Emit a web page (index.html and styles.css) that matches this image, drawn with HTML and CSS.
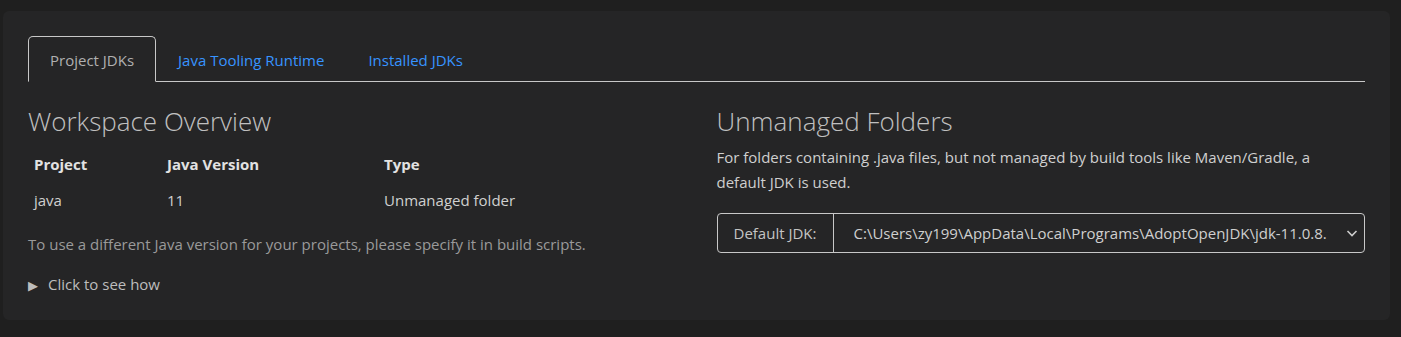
FILE: index.html
```html
<!DOCTYPE html>
<html lang="en">
<head>
  <meta charset="UTF-8">
  <meta name="viewport" content="width=device-width, initial-scale=1.0">
  <title>Project JDKs</title>
  <link rel="stylesheet" href="styles.css">
</head>
<body>
  <div class="card">
    <div class="tabs">
      <div class="tab active">Project JDKs</div>
      <div class="tab">Java Tooling Runtime</div>
      <div class="tab">Installed JDKs</div>
    </div>
    <div class="columns">
      <div class="col">
        <h2>Workspace Overview</h2>
        <table class="projects">
          <tr>
            <th class="c1">Project</th>
            <th class="c2">Java Version</th>
            <th>Type</th>
          </tr>
          <tr>
            <td>java</td>
            <td>11</td>
            <td>Unmanaged folder</td>
          </tr>
        </table>
        <p class="hint">To use a different Java version for your projects, please specify it in build scripts.</p>
        <div class="details"><span class="arrow">&#9654;</span>Click to see how</div>
      </div>
      <div class="col">
        <h2>Unmanaged Folders</h2>
        <p class="desc">For folders containing .java files, but not managed by build tools like Maven/Gradle, a default JDK is used.</p>
        <div class="jdk-select">
          <div class="label">Default JDK:</div>
          <div class="value">C:\Users\zy199\AppData\Local\Programs\AdoptOpenJDK\jdk-11.0.8.10-hotspot</div>
          <svg class="chevron" width="12" height="12" viewBox="0 0 12 12"><path d="M1.5 4 L6 8.5 L10.5 4" fill="none" stroke="#cccccc" stroke-width="1.6"/></svg>
        </div>
      </div>
    </div>
  </div>
</body>
</html>
```

FILE: styles.css
```css
body {
  margin: 0;
  padding: 11px 11px 0 3px;
  background-color: #1f1f1f;
  font-family: "Open Sans", sans-serif;
  font-size: 15px;
  color: #cccccc;
}
.card {
  background-color: #252526;
  border-radius: 6px;
  padding: 25px 25px 25px 25px;
}
.tabs {
  display: flex;
  border-bottom: 1px solid #c8c8c8;
  height: 45px;
}
.tab {
  padding: 0 21px;
  line-height: 46px;
  color: #3794ff;
  margin-bottom: -1px;
  border: 1px solid transparent;
  border-radius: 5px 5px 0 0;
}
.tab.active {
  color: #b0b0b0;
  border-color: #c8c8c8;
  border-bottom-color: #252526;
}
.columns {
  display: grid;
  grid-template-columns: minmax(0, 1fr) minmax(0, 1fr);
  column-gap: 40px;
}
h2 {
  font-weight: 300;
  font-size: 26px;
  color: #c0c0c0;
  margin: 22px 0 0 0;
  line-height: 34px;
}
.projects {
  border-collapse: collapse;
  margin-top: 8px;
}
.projects th, .projects td {
  text-align: left;
  padding: 0 6px;
  height: 36px;
}
.projects th {
  font-weight: 700;
  color: #e2e2e2;
}
.projects td {
  color: #d0d0d0;
}
.c1 { width: 121px; }
.c2 { width: 205px; }
.hint {
  color: #9a9a9a;
  margin: 16px 0 0 0;
  line-height: 20px;
}
.details {
  color: #bdbdbd;
  margin-top: 20px;
  line-height: 20px;
}
.arrow {
  font-size: 13px;
  margin-right: 10px;
  color: #bdbdbd;
}
.desc {
  color: #cfcfcf;
  margin: 7px 12px 0 0;
  line-height: 25px;
}
.jdk-select {
  display: flex;
  align-items: center;
  margin-top: 18px;
  height: 38px;
  border: 1px solid #c8c8c8;
  border-radius: 4px;
}
.label {
  width: 116px;
  flex: none;
  box-sizing: border-box;
  text-align: center;
  line-height: 38px;
  border-right: 1px solid #c8c8c8;
  color: #c4c4c4;
}
.value {
  flex: 1;
  white-space: nowrap;
  overflow: hidden;
  padding-left: 20px;
  margin-right: 18px;
  color: #cfcfcf;
}
.chevron {
  flex: none;
  margin-right: 6px;
}
```
